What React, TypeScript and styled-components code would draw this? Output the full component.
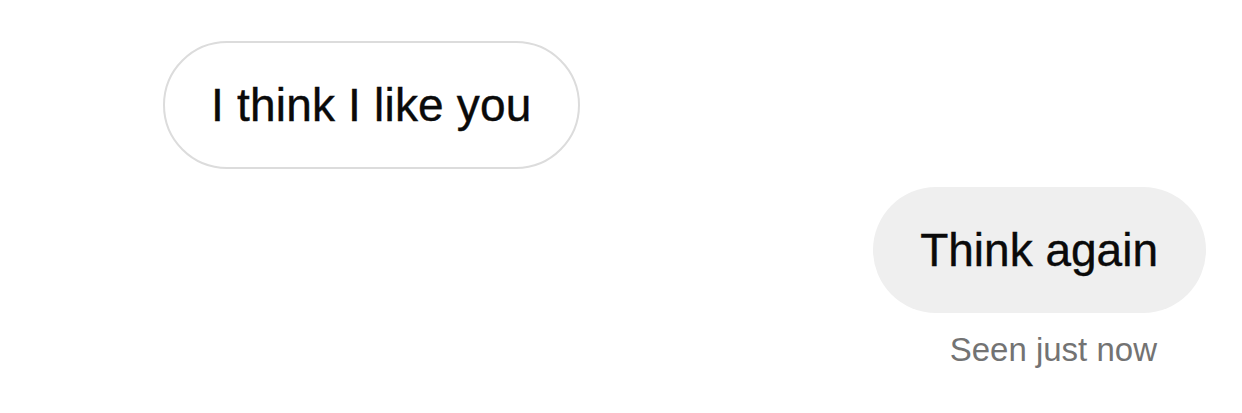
import React from "react";
import styled, { createGlobalStyle } from "styled-components";

const Global = createGlobalStyle`
  html, body { margin: 0; padding: 0; background: #ffffff; }
  body { font-family: "Liberation Sans", Arial, sans-serif; -webkit-font-smoothing: antialiased; }
`;

const Thread = styled.div`
  width: 1242px;
  height: 413px;
  box-sizing: border-box;
  padding: 41px 36px 0 163px;
  display: flex;
  flex-direction: column;
  background: #ffffff;
`;

const Row = styled.div<{ $mine?: boolean }>`
  display: flex;
  flex-direction: column;
  align-items: ${(p) => (p.$mine ? "flex-end" : "flex-start")};
  margin-top: ${(p) => (p.$mine ? "18px" : "0")};
`;

const Bubble = styled.div<{ $mine?: boolean }>`
  box-sizing: border-box;
  height: ${(p) => (p.$mine ? "126px" : "128px")};
  border-radius: 64px;
  padding: ${(p) => (p.$mine ? "0 48px 0 47px" : "0 46px 0 46px")};
  display: flex;
  align-items: center;
  font-size: 46px;
  line-height: 1;
  color: #0a0a0a;
  letter-spacing: ${(p) => (p.$mine ? "0" : "0.2px")};
  -webkit-text-stroke: 0.4px #0a0a0a;
  background: ${(p) => (p.$mine ? "#efefef" : "#ffffff")};
  border: ${(p) => (p.$mine ? "none" : "2px solid #dcdcdc")};
`;

const Seen = styled.div`
  margin-top: 20px;
  margin-right: 49px;
  font-size: 33px;
  line-height: 1;
  color: #737373;
`;

export default function App() {
  return (
    <>
      <Global />
      <Thread>
        <Row>
          <Bubble>I think I like you</Bubble>
        </Row>
        <Row $mine>
          <Bubble $mine>Think again</Bubble>
          <Seen>Seen just now</Seen>
        </Row>
      </Thread>
    </>
  );
}
